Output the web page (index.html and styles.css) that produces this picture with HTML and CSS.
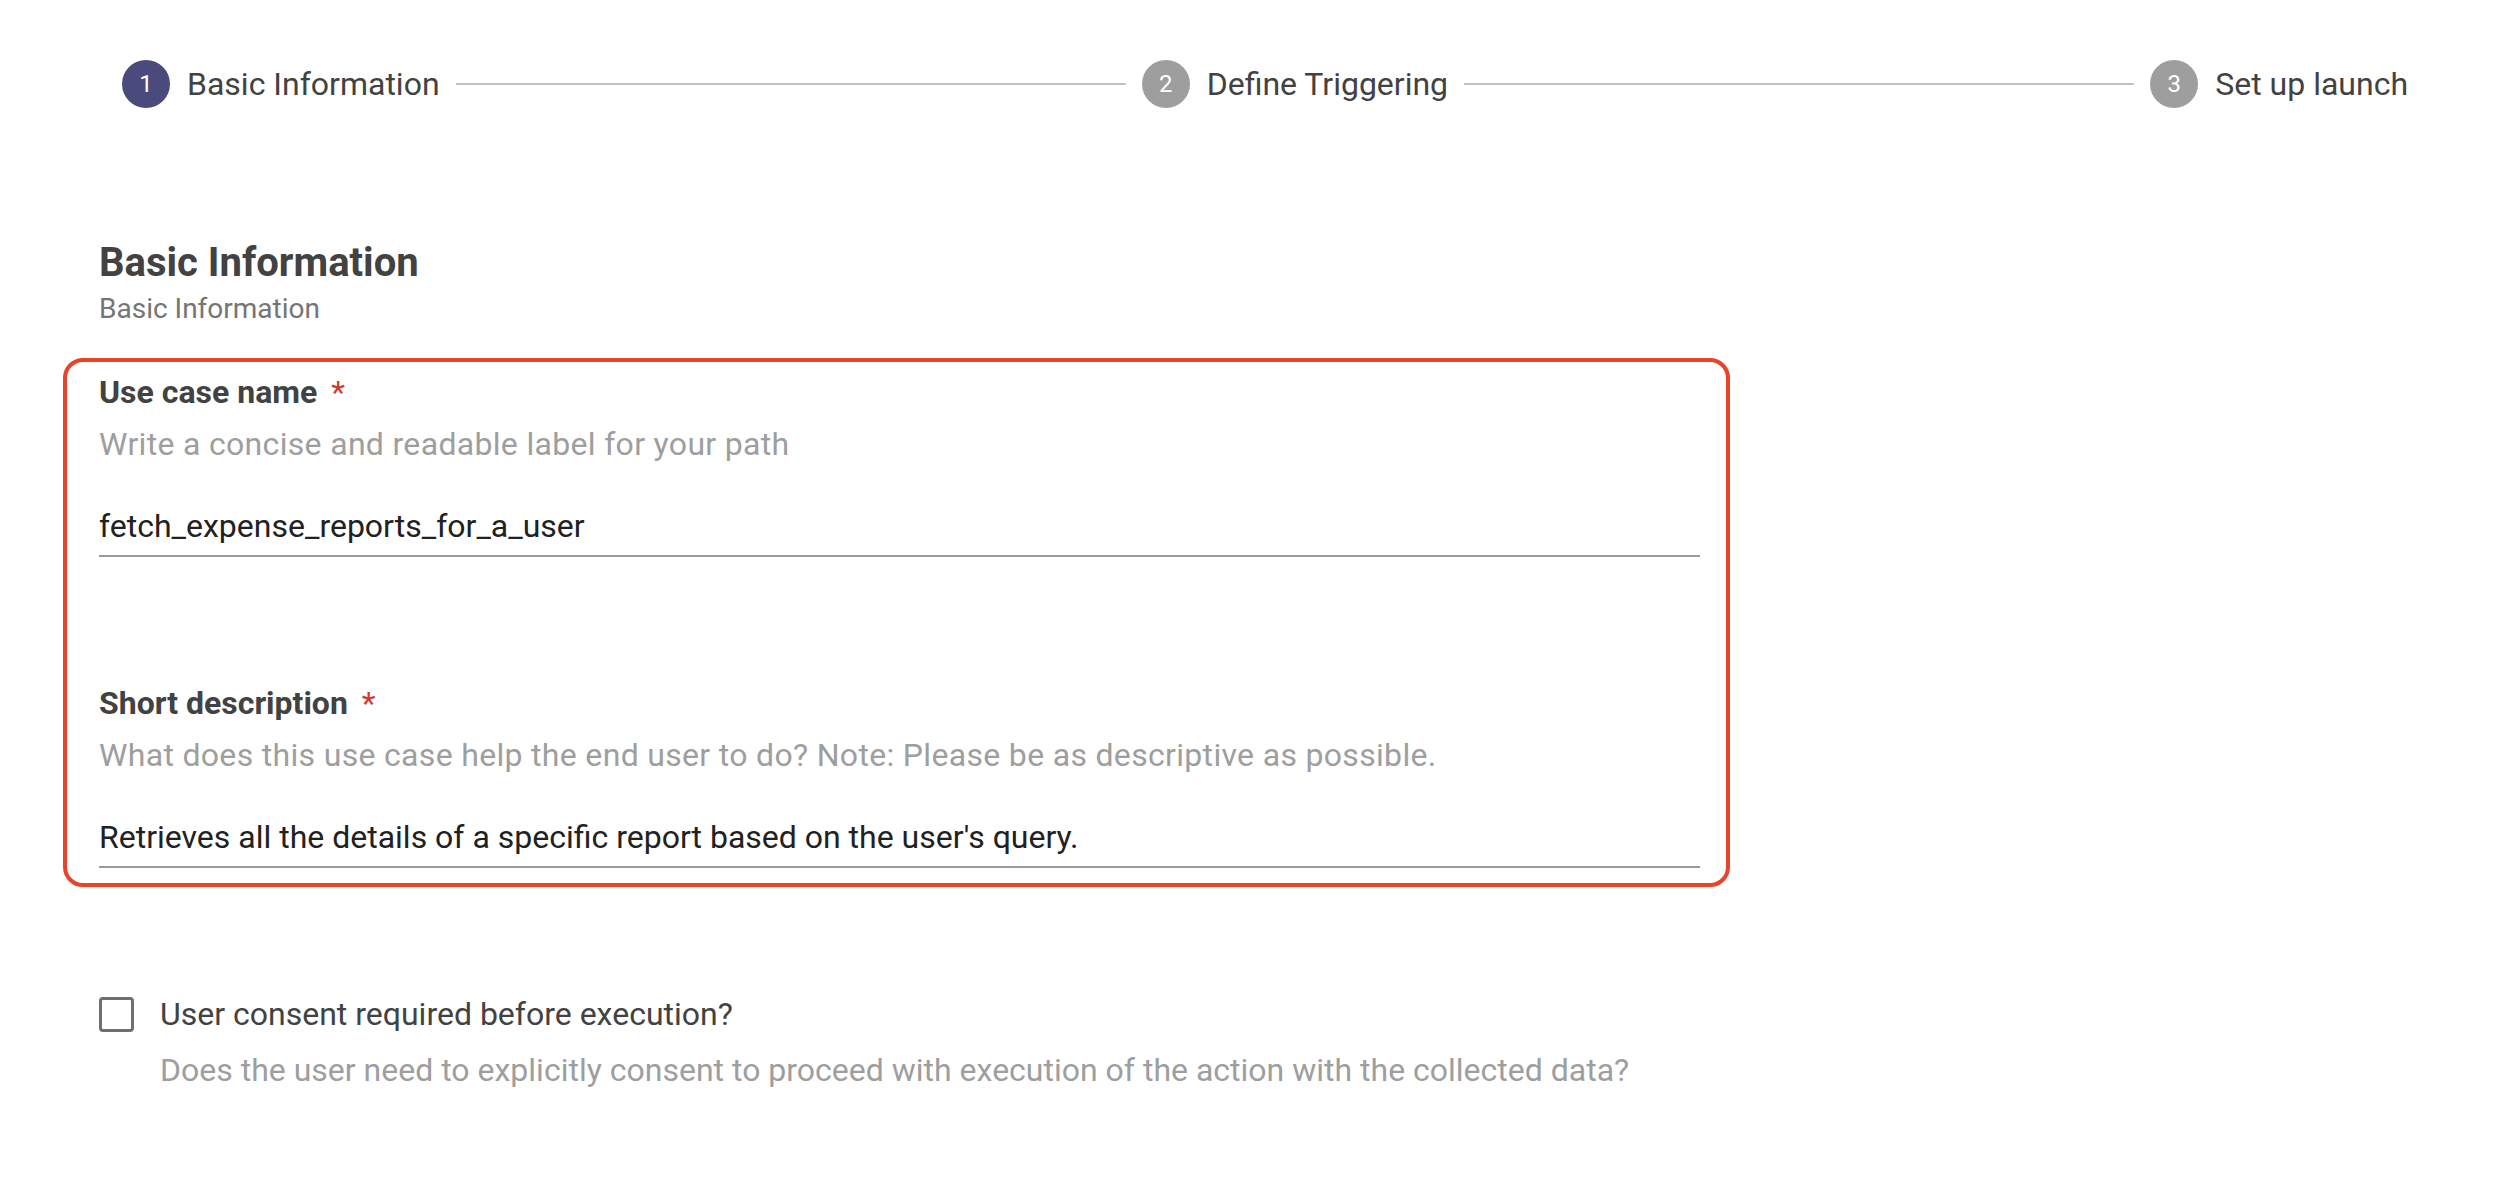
FILE: index.html
```html
<!DOCTYPE html>
<html lang="en">
<head>
<meta charset="utf-8">
<title>Basic Information</title>
<link rel="stylesheet" href="styles.css">
</head>
<body>
<nav class="stepper">
  <div class="step active"><span class="step-num">1</span><span class="step-label">Basic Information</span></div>
  <div class="connector"></div>
  <div class="step"><span class="step-num">2</span><span class="step-label">Define Triggering</span></div>
  <div class="connector"></div>
  <div class="step"><span class="step-num">3</span><span class="step-label">Set up launch</span></div>
</nav>
<main class="content">
  <header class="section-head">
    <h1 class="section-title">Basic Information</h1>
    <p class="section-sub">Basic Information</p>
  </header>
  <div class="highlight">
    <div class="field">
      <div class="field-label">Use case name<span class="req">*</span></div>
      <div class="field-hint">Write a concise and readable label for your path</div>
      <div class="field-value">fetch_expense_reports_for_a_user</div>
    </div>
    <div class="field field-next">
      <div class="field-label">Short description<span class="req">*</span></div>
      <div class="field-hint">What does this use case help the end user to do? Note: Please be as descriptive as possible.</div>
      <div class="field-value">Retrieves all the details of a specific report based on the user's query.</div>
    </div>
  </div>
  <div class="consent">
    <div class="consent-row"><span class="checkbox"></span><span class="consent-label">User consent required before execution?</span></div>
    <div class="consent-desc">Does the user need to explicitly consent to proceed with execution of the action with the collected data?</div>
  </div>
</main>
</body>
</html>
```
FILE: styles.css
```css
* { box-sizing: border-box; }
body {
  margin: 0;
  background: #ffffff;
  font-family: Roboto, "Liberation Sans", Arial, sans-serif;
  color: #424242;
}
.stepper {
  display: flex;
  align-items: center;
  padding: 60px 100px 0 122px;
  height: 108px;
}
.step {
  display: flex;
  align-items: center;
  gap: 17px;
}
.step-num {
  width: 48px;
  height: 48px;
  border-radius: 50%;
  background: #9e9e9e;
  color: #ffffff;
  font-size: 24px;
  display: flex;
  align-items: center;
  justify-content: center;
}
.step.active .step-num { background: #4b4a7c; }
.step-label {
  font-size: 32px;
  line-height: 40px;
  color: #424242;
}
.connector {
  flex: 1;
  height: 2px;
  background: #c2c2c2;
  margin: 0 16px;
}
.content {
  padding: 0 63px;
}
.section-head {
  margin-top: 131px;
  padding-left: 36px;
}
.section-title {
  margin: 0;
  font-size: 40px;
  line-height: 48px;
  font-weight: 700;
  color: #424242;
}
.section-sub {
  margin: 4px 0 0;
  font-size: 28px;
  line-height: 36px;
  color: #757575;
}
.highlight {
  margin-top: 31px;
  width: 1667px;
  border: 4px solid #e9432a;
  border-radius: 20px;
  padding: 10px 26px 15px 32px;
}
.field-next { margin-top: 126px; }
.field-label {
  font-size: 32px;
  line-height: 40px;
  font-weight: 700;
  color: #424242;
}
.req {
  color: #d0392b;
  font-weight: 400;
  margin-left: 14px;
}
.field-hint {
  margin-top: 12px;
  font-size: 32px;
  line-height: 40px;
  letter-spacing: 0.32px;
  color: #9e9e9e;
}
.field-value {
  margin-top: 42px;
  font-size: 32px;
  line-height: 40px;
  color: #212121;
  padding-bottom: 9px;
  border-bottom: 2px solid #9a9a9a;
}
.consent {
  margin-top: 107px;
  padding-left: 36px;
}
.consent-row {
  display: flex;
  align-items: center;
  gap: 26px;
}
.checkbox {
  width: 35px;
  height: 35px;
  border: 3px solid #6f6f6f;
  border-radius: 4px;
  flex: none;
}
.consent-label {
  font-size: 32px;
  line-height: 40px;
  color: #424242;
}
.consent-desc {
  margin-top: 16px;
  padding-left: 61px;
  font-size: 32px;
  line-height: 40px;
  color: #9e9e9e;
}
```
